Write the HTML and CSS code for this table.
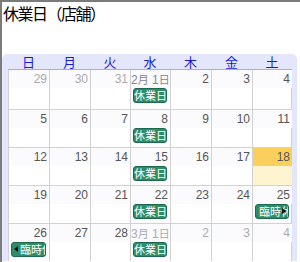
FILE: index.html
```html
<!DOCTYPE html>
<html lang="ja">
<head>
<meta charset="utf-8">
<link rel="stylesheet" href="styles.css">
</head>
<body>
<div class="frame">
  <h1 class="title">休業日（店舗）</h1>
  <div class="cal">
    <div class="dow">
      <span>日</span><span>月</span><span>火</span><span>水</span><span>木</span><span>金</span><span>土</span>
    </div>
    <div class="week first">
      <div class="day"><div class="num off">29</div></div>
      <div class="day"><div class="num off">30</div></div>
      <div class="day"><div class="num off">31</div></div>
      <div class="day"><div class="num mon">2<span class="k">月</span> 1<span class="k">日</span></div><div class="ev">休業日</div></div>
      <div class="day"><div class="num">2</div></div>
      <div class="day"><div class="num">3</div></div>
      <div class="day"><div class="num">4</div></div>
    </div>
    <div class="week">
      <div class="day"><div class="num">5</div></div>
      <div class="day"><div class="num">6</div></div>
      <div class="day"><div class="num">7</div></div>
      <div class="day"><div class="num">8</div><div class="ev">休業日</div></div>
      <div class="day"><div class="num">9</div></div>
      <div class="day"><div class="num">10</div></div>
      <div class="day"><div class="num">11</div></div>
    </div>
    <div class="week">
      <div class="day"><div class="num">12</div></div>
      <div class="day"><div class="num">13</div></div>
      <div class="day"><div class="num">14</div></div>
      <div class="day"><div class="num">15</div><div class="ev">休業日</div></div>
      <div class="day"><div class="num">16</div></div>
      <div class="day"><div class="num">17</div></div>
      <div class="day today"><div class="num">18</div></div>
    </div>
    <div class="week">
      <div class="day"><div class="num">19</div></div>
      <div class="day"><div class="num">20</div></div>
      <div class="day"><div class="num">21</div></div>
      <div class="day"><div class="num">22</div><div class="ev">休業日</div></div>
      <div class="day"><div class="num">23</div></div>
      <div class="day"><div class="num">24</div></div>
      <div class="day"><div class="num">25</div><div class="ev cont-r">臨時休</div></div>
    </div>
    <div class="week">
      <div class="day"><div class="num">26</div><div class="ev cont-l">臨時休</div></div>
      <div class="day"><div class="num">27</div></div>
      <div class="day"><div class="num">28</div></div>
      <div class="day"><div class="num mon off">3<span class="k">月</span> 1<span class="k">日</span></div><div class="ev">休業日</div></div>
      <div class="day"><div class="num off">2</div></div>
      <div class="day"><div class="num off">3</div></div>
      <div class="day"><div class="num off">4</div></div>
    </div>
  </div>
</div>
</body>
</html>
```
FILE: styles.css
```css
* { box-sizing: border-box; }
html, body { margin: 0; padding: 0; background: #fff; }
.frame {
  width: 300px;
  height: 262px;
  overflow: hidden;
  border-top: 2px solid #7b7b7b;
  border-left: 2px solid #7b7b7b;
  background: #fff;
}
.title {
  margin: 0;
  height: 52px;
  padding: 1px 0 0 1px;
  font: normal 16px/21px "Noto Sans CJK JP", sans-serif;
  letter-spacing: -1.5px;
  color: #000;
}
.cal {
  width: 295px;
  background: #e4e7fb;
  border-radius: 5px 5px 0 0;
  padding: 0 5px 0 6px;
}
.dow, .week {
  display: grid;
  grid-template-columns: 41px 41px 40px 40px 41px 41px 40px;
}
.dow {
  height: 16px;
  border-bottom: 1px solid #a3acef;
}
.dow span {
  text-align: center;
  font: 13px/15px "Noto Sans CJK JP", sans-serif;
  color: #1818d6;
}
.week {
  height: 38px;
  background: #fff;
  border-top: 1px solid #d2d2d2;
  border-right: 1px solid #d2d2d2;
}
.week.first {
  height: 39px;
  border-top: 0;
}
.day {
  border-left: 1px solid #d2d2d2;
  min-width: 0;
}
.num {
  height: 18px;
  padding: 1px 2px 0 0;
  text-align: right;
  font: 12px/16px "Liberation Sans", Arial, sans-serif;
  color: #555;
  white-space: nowrap;
  background: #fbfbfe;
}
.num.off { color: #aaa; }
.num.mon { color: #888; }
.num.mon.off { color: #aaa; }
.num .k { font: 11px/16px "Noto Sans CJK JP", sans-serif; }
.today .num { background: #fbcf5c; color: #555; }
.today { background: #fff4d0; }
.ev {
  position: relative;
  height: 15px;
  margin: 0 3px 0 2px;
  background: #2e8c6a;
  border: 1px solid #1c6a4d;
  border-radius: 3px;
  color: #fff;
  font: 11px/13px "Noto Sans CJK JP", sans-serif;
  text-align: center;
  white-space: nowrap;
  overflow: hidden;
}
.ev.cont-r { text-align: left; padding-left: 3px; }
.ev.cont-l { text-align: left; padding-left: 8px; }
.ev.cont-r::after {
  content: "";
  position: absolute;
  right: 2px;
  top: 3px;
  border-style: solid;
  border-width: 3px 0 3px 4px;
  border-color: transparent transparent transparent #111;
}
.ev.cont-l::before {
  content: "";
  position: absolute;
  left: 2px;
  top: 3px;
  border-style: solid;
  border-width: 3px 4px 3px 0;
  border-color: transparent #111 transparent transparent;
}
```
